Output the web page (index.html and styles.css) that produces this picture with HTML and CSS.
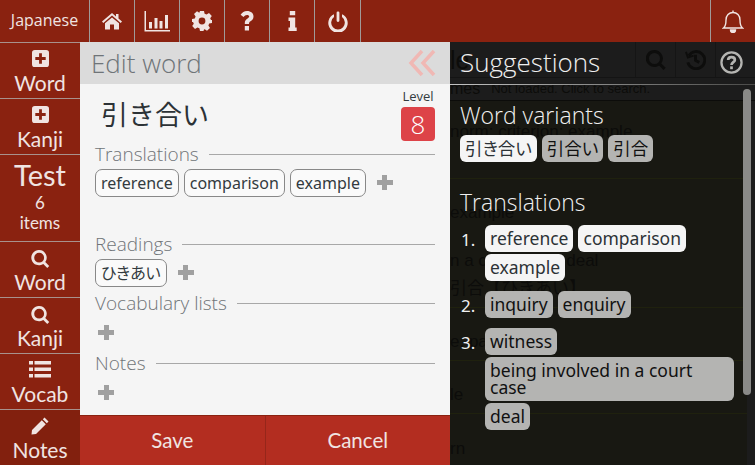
FILE: index.html
```html
<!DOCTYPE html>
<html lang="en">
<head>
    <meta charset="UTF-8">
    <title>Edit word</title>
    <link rel="stylesheet" href="styles.css">
</head>
<body>
    <!-- Top bar -->
    <header class="topbar">
        <div class="lang">Japanese</div>
        <div class="top-btn">
            <svg class="ico" width="22" height="18" viewBox="0 0 22 18"><path d="M11 1 L1 9.6 L2.3 11 L11 3.6 L19.7 11 L21 9.6 L17.5 6.6 V2 H15 V4.5 Z"/><path d="M4 11.3 L11 5.4 L18 11.3 V17.5 H13 V12.5 H9 V17.5 H4 Z"/></svg>
        </div>
        <div class="top-btn">
            <svg class="ico" width="27" height="21" viewBox="0 0 27 21"><path d="M1 0 H2 V19 H26 V20.5 H0.5 V0 Z"/><path d="M5 11 H8 V17.5 H5 Z M10.500 7 H13.500 V17.500 H10.500 Z M15.500 10 H18.500 V17.500 H15.500 Z M21 4 H24 V17.500 H21 Z"/></svg>
        </div>
        <div class="top-btn">
            <svg class="ico" width="20" height="20" viewBox="0 0 20 20"><path fill-rule="evenodd" d="M8 0 H12 L12.600 2.800 L14.600 3.600 L17 2 L19.800 5 L18.200 7.300 L19 9 L20 9 V12 L17.200 12.600 L16.400 14.600 L18 17 L15 19.800 L12.700 18.200 L12 18.500 L11.500 20 H8 L7.400 17.200 L5.400 16.400 L3 18 L0.200 15 L1.800 12.700 L1 11 L0 11 V8 L2.800 7.400 L3.600 5.400 L2 3 L5 0.200 L7.300 1.800 Z M10 6.600 A3.400 3.400 0 1 0 10 13.400 A3.400 3.400 0 1 0 10 6.600 Z"/></svg>
        </div>
        <div class="top-btn">
            <svg class="ico" width="14" height="20" viewBox="0 0 14 20"><path d="M7 0 C11 0 13.500 2.300 13.500 5.500 C13.500 8 12 9.200 10.500 10.200 C9.300 11 9 11.500 9 13 H4.800 V12 C4.800 9.800 5.800 8.700 7.300 7.700 C8.500 6.900 9.200 6.500 9.200 5.600 C9.200 4.600 8.300 4 7 4 C5.600 4 4.500 4.800 3.500 6 L0.600 3.800 C2.200 1.300 4.200 0 7 0 Z M4.800 15 H9 V19.500 H4.800 Z"/></svg>
        </div>
        <div class="top-btn">
            <svg class="ico" width="9" height="20" viewBox="0 0 9 20"><path d="M1.800 0 H7.200 V4.200 H1.800 Z M0.500 6.500 H7.200 V16.500 H8.700 V20 H0.500 V16.500 H2 V10 H0.500 Z"/></svg>
        </div>
        <div class="top-btn last">
            <svg class="ico" width="20" height="21" viewBox="0 0 20 21"><path d="M10 0.500 A1.300 1.300 0 0 1 11.400 1.800 V9.500 A1.400 1.400 0 0 1 8.600 9.500 V1.800 A1.300 1.300 0 0 1 10 0.500 Z"/><path d="M6 3.200 V6.100 A6.800 6.800 0 1 0 14 6.100 V3.200 A9.700 9.700 0 1 1 6 3.200 Z"/></svg>
        </div>
        <div class="top-fill"></div>
        <div class="bell-btn">
            <svg width="22" height="23" viewBox="0 0 22 23" fill="none" stroke="#f0e4e2" stroke-width="1.400"><path d="M1.500 18 C4 16 4 13 4 10 C4 5.500 7 2.500 11 2.500 C15 2.500 18 5.500 18 10 C18 13 18 16 20.500 18 Z"/><path d="M11 0.500 V2.500"/><path d="M8.500 20 A2.500 2.500 0 0 0 13.500 20 Z" fill="#f0e4e2"/></svg>
        </div>
    </header>

    <div class="main">
        <!-- Side menu -->
        <nav class="sidebar">
            <div class="side-btn">
                <div class="side-ico"><svg class="ico" width="17" height="17" viewBox="0 0 18 18"><path fill-rule="evenodd" d="M3 0 H15 A3 3 0 0 1 18 3 V15 A3 3 0 0 1 15 18 H3 A3 3 0 0 1 0 15 V3 A3 3 0 0 1 3 0 Z M7.500 3.500 V7.500 H3.500 V10.500 H7.500 V14.500 H10.500 V10.500 H14.500 V7.500 H10.500 V3.500 Z"/></svg></div>
                <span>Word</span>
            </div>
            <div class="side-btn">
                <div class="side-ico"><svg class="ico" width="17" height="17" viewBox="0 0 18 18"><path fill-rule="evenodd" d="M3 0 H15 A3 3 0 0 1 18 3 V15 A3 3 0 0 1 15 18 H3 A3 3 0 0 1 0 15 V3 A3 3 0 0 1 3 0 Z M7.500 3.500 V7.500 H3.500 V10.500 H7.500 V14.500 H10.500 V10.500 H14.500 V7.500 H10.500 V3.500 Z"/></svg></div>
                <span>Kanji</span>
            </div>
            <div class="side-btn test">
                <span class="test-title">Test</span>
                <span class="test-sub">6</span>
                <span class="test-sub">items</span>
            </div>
            <div class="side-btn">
                <div class="side-ico low"><svg class="ico" width="19" height="18" viewBox="0 0 20 20"><path fill-rule="evenodd" d="M8.500 0 A8.500 8.500 0 0 1 15.300 13.400 L19.700 17.800 L17.500 20 L13.100 15.500 A8.500 8.500 0 1 1 8.500 0 Z M8.500 3 A5.500 5.500 0 1 0 8.500 14 A5.500 5.500 0 1 0 8.500 3 Z"/></svg></div>
                <span>Word</span>
            </div>
            <div class="side-btn">
                <div class="side-ico low"><svg class="ico" width="19" height="18" viewBox="0 0 20 20"><path fill-rule="evenodd" d="M8.500 0 A8.500 8.500 0 0 1 15.300 13.400 L19.700 17.800 L17.500 20 L13.100 15.500 A8.500 8.500 0 1 1 8.500 0 Z M8.500 3 A5.500 5.500 0 1 0 8.500 14 A5.500 5.500 0 1 0 8.500 3 Z"/></svg></div>
                <span>Kanji</span>
            </div>
            <div class="side-btn">
                <div class="side-ico"><svg class="ico" width="22" height="17" viewBox="0 0 22 17"><path d="M0 0 H4 V3.500 H0 Z M5.500 0 H22 V3.500 H5.500 Z M0 6.500 H4 V10 H0 Z M5.500 6.500 H22 V10 H5.500 Z M0 13 H4 V16.500 H0 Z M5.500 13 H22 V16.500 H5.500 Z"/></svg></div>
                <span>Vocab</span>
            </div>
            <div class="side-btn active">
                <div class="side-ico"><svg class="ico" width="18" height="18" viewBox="0 0 18 18"><path d="M13.500 0.500 L17.500 4.500 L15.800 6.200 L11.800 2.200 Z M10.800 3.200 L14.800 7.200 L5 17 L0.500 17.500 L1 13 Z"/></svg></div>
                <span>Notes</span>
            </div>
        </nav>

        <!-- Page underneath, dimmed by the suggestions panel -->
        <div class="backdrop">
            <div class="back-head">
                <span class="back-title">le</span>
                <div class="back-tool">
                    <svg width="20" height="20" viewBox="0 0 20 20" fill="#0d0d0c"><path fill-rule="evenodd" d="M8.500 0 A8.500 8.500 0 0 1 15.300 13.400 L19.700 17.800 L17.500 20 L13.100 15.500 A8.500 8.500 0 1 1 8.500 0 Z M8.500 3 A5.500 5.500 0 1 0 8.500 14 A5.500 5.500 0 1 0 8.500 3 Z"/></svg>
                </div>
                <div class="back-tool">
                    <svg width="21" height="21" viewBox="0 0 22 22" fill="none" stroke="#0d0d0c" stroke-width="3"><path d="M4 7 A9 9 0 1 1 3 14"/><path d="M11 6 V12 L15 14"/><path d="M1 3 L3 9 L9 7" stroke-width="2"/></svg>
                </div>
                <div class="back-tool"></div>
            </div>
            <div class="back-row names"><span>mes</span><span>Not loaded. Click to search.</span></div>
            <div class="back-row meaning">norm; criterion; example</div>
            <div class="back-row entry">
                <div>example</div>
                <div class="entry-deal">n a court case; deal</div>
                <div class="entry-kana">引合【ひきあい】</div>
            </div>
            <div class="back-row short">e; pattern</div>
            <div class="back-row short">le</div>
            <div class="back-row end">rn</div>
        </div>

        <!-- Edit word dialog -->
        <section class="dialog">
            <div class="dialog-head">
                <h1>Edit word</h1>
                <svg class="collapse" width="28" height="28" viewBox="0 0 28 28" fill="none" stroke="#f0b8b4" stroke-width="3.500"><path d="M14 2 L3 14 L14 26"/><path d="M26 2 L15 14 L26 26"/></svg>
            </div>
            <div class="dialog-body">
                <div class="word-row">
                    <div class="word">引き合い</div>
                    <div class="level">
                        <span class="level-label">Level</span>
                        <span class="level-num">8</span>
                    </div>
                </div>
                <div class="section-head"><span>Translations</span><i></i></div>
                <div class="tags tall">
                    <span class="tag">reference</span>
                    <span class="tag">comparison</span>
                    <span class="tag">example</span>
                    <span class="plus"></span>
                </div>
                <div class="section-head"><span>Readings</span><i></i></div>
                <div class="tags">
                    <span class="tag">ひきあい</span>
                    <span class="plus"></span>
                </div>
                <div class="section-head"><span>Vocabulary lists</span><i></i></div>
                <div class="tags only-plus"><span class="plus"></span></div>
                <div class="section-head"><span>Notes</span><i></i></div>
                <div class="tags only-plus"><span class="plus"></span></div>
            </div>
            <div class="dialog-foot">
                <button>Save</button>
                <button>Cancel</button>
            </div>
        </section>

        <!-- Suggestions panel -->
        <aside class="suggest">
            <div class="suggest-head">Suggestions
                <svg class="help" width="23" height="23" viewBox="0 0 24 24" fill="none" stroke="#b5b5b2" stroke-width="2.400"><circle cx="12" cy="12" r="10.500"/><path d="M8.500 9.500 C8.500 7.500 10 6.300 12 6.300 C14 6.300 15.500 7.500 15.500 9.300 C15.500 11.500 12 11.700 12 14.500" stroke-width="2.800"/><path d="M12 16 V19" stroke-width="2.800"/></svg>
            </div>
            <div class="suggest-scroll">
                <h2>Word variants</h2>
                <div class="chips">
                    <span class="chip on">引き合い</span>
                    <span class="chip">引合い</span>
                    <span class="chip">引合</span>
                </div>
                <h2 class="second">Translations</h2>
                <ol class="meanings">
                    <li>
                        <span class="chip on">reference</span>
                        <span class="chip on">comparison</span>
                        <span class="chip on">example</span>
                    </li>
                    <li>
                        <span class="chip">inquiry</span>
                        <span class="chip">enquiry</span>
                    </li>
                    <li>
                        <span class="chip">witness</span>
                        <span class="chip">being involved in a court case</span>
                        <span class="chip">deal</span>
                    </li>
                </ol>
            </div>
            <div class="scrollbar"></div>
        </aside>
    </div>
</body>
</html>
```

FILE: styles.css
```css
/* General */
html, body {
    margin: 0;
    height: 100%;
}

body {
    width: 755px;
    height: 465px;
    overflow: hidden;
    display: flex;
    flex-direction: column;
    font-family: "Noto Sans", "Noto Sans CJK JP", sans-serif;
    font-feature-settings: "palt";
    background-color: #1c1c1c;
}

.ico {
    fill: #f0e4e2;
    display: block;
}

/* Top bar */
.topbar {
    display: flex;
    height: 42px;
    flex: none;
    background-color: #8a2210;
}

.lang {
    width: 89px;
    border-right: 1px solid #a09a98;
    color: #f0e4e2;
    font-family: "Open Sans", sans-serif;
    font-size: 16px;
    line-height: 41px;
    text-align: center;
}

.top-btn {
    width: 44px;
    border-right: 1px solid #a09a98;
    display: flex;
    align-items: center;
    justify-content: center;
}

.top-btn.last {
    width: 45px;
}

.top-fill {
    flex: 1;
}

.bell-btn {
    width: 44px;
    border-left: 1px solid #a09a98;
    display: flex;
    align-items: center;
    justify-content: center;
}

/* Layout */
.main {
    flex: 1;
    display: flex;
    position: relative;
    min-height: 0;
}

/* Side menu */
.sidebar {
    width: 80px;
    flex: none;
    background-color: #8a2210;
    border-top: 1px solid #a8918c;
    box-sizing: border-box;
    display: flex;
    flex-direction: column;
    color: #f0e4e2;
    font-family: "Lato", sans-serif;
}

.side-btn {
    display: flex;
    flex-direction: column;
    align-items: center;
    height: 56px;
    flex: none;
    border-bottom: 1px solid #a8918c;
    box-sizing: border-box;
    padding-top: 7px;
    font-size: 21px;
    line-height: 24px;
}

.side-ico {
    height: 21px;
}

.side-ico.low {
    padding-top: 1px;
    height: 20px;
}

.side-btn.test {
    height: 87px;
    padding-top: 5px;
}

.side-btn.active {
    flex: 1;
    background-color: #82200e;
    border-bottom: none;
}

.test-title {
    font-size: 29px;
    line-height: 30px;
    margin-bottom: 3px;
}

.test-sub {
    font-size: 17px;
    line-height: 20px;
}

/* Dimmed page */
.backdrop {
    flex: 1;
    padding-left: 370px;
    color: #0c0c0a;
    font-family: "Liberation Sans", "Noto Sans CJK JP", sans-serif;
    font-feature-settings: normal;
    font-size: 17px;
    line-height: 20px;
    overflow: hidden;
}

.back-head {
    height: 35px;
    display: flex;
    align-items: center;
    justify-content: flex-end;
    border-bottom: 1px solid #141414;
}

.back-title {
    margin-right: auto;
    font-size: 25px;
}

.back-tool {
    width: 40px;
    height: 35px;
    border-left: 1px solid #151515;
    box-sizing: border-box;
    display: flex;
    align-items: center;
    justify-content: center;
}

.back-row {
    margin-right: 8px;
    border-bottom: 1px solid #1f210e;
    box-sizing: border-box;
    background-color: #181812;
}

.names {
    height: 23px;
    display: flex;
    gap: 11px;
    font-size: 13px;
    line-height: 22px;
    margin-right: 0;
    border-bottom-color: #0c0c0a;
    background-color: #1c1c1c;
}

.names span:first-child {
    font-size: 16px;
}

.meaning {
    height: 78px;
    padding-top: 21px;
}

.entry {
    height: 129px;
    padding-top: 24px;
}

.entry-deal {
    margin-top: 28px;
}

.entry-kana {
    margin-top: 8px;
}

.short {
    height: 53px;
    padding-top: 24px;
}

.end {
    height: 60px;
    padding-top: 25px;
    border-bottom: none;
}

/* Dialog */
.dialog {
    position: absolute;
    left: 80px;
    top: 0;
    bottom: 0;
    width: 370px;
    display: flex;
    flex-direction: column;
    background-color: #f5f5f5;
}

.dialog-head {
    height: 42px;
    flex: none;
    background-color: #dbdbdb;
    display: flex;
    align-items: center;
    justify-content: space-between;
    padding: 0 14px 0 11px;
}

.dialog-head h1 {
    margin: 0;
    font-family: "Open Sans", sans-serif;
    font-weight: 300;
    font-size: 26px;
    color: #6f7478;
}

.dialog-body {
    flex: 1;
    padding: 0 15px;
    min-height: 0;
}

.word-row {
    display: flex;
    justify-content: space-between;
    height: 58px;
}

.word {
    font-family: "Noto Sans CJK JP", sans-serif;
    font-feature-settings: normal;
    font-size: 27px;
    line-height: 40px;
    color: #2c3236;
    padding: 10px 0 0 6px;
}

.level {
    display: flex;
    flex-direction: column;
    align-items: center;
    padding-top: 4px;
    gap: 3px;
}

.level-label {
    font-family: "Open Sans", sans-serif;
    font-size: 13px;
    line-height: 16px;
    color: #333b40;
}

.level-num {
    width: 34px;
    height: 34px;
    border-radius: 4px;
    background-color: #dd4348;
    color: #fff;
    font-family: "Open Sans", sans-serif;
    font-weight: 300;
    font-size: 26px;
    line-height: 34px;
    text-align: center;
}

.section-head {
    display: flex;
    align-items: center;
    gap: 10px;
    height: 24px;
    font-family: "Open Sans", sans-serif;
    font-weight: 300;
    font-size: 19px;
    color: #707478;
}

.section-head i {
    flex: 1;
    height: 1px;
    background-color: #a8a8a8;
}

.tags {
    display: flex;
    align-items: flex-start;
    gap: 5px;
    height: 32px;
    padding-top: 3px;
}

.tags.tall {
    height: 63px;
}

.tags.only-plus {
    height: 35px;
    padding: 0 0 1px;
    align-items: center;
}

.tag {
    border: 1px solid #888;
    border-radius: 7px;
    background-color: #fafafa;
    color: #333b40;
    font-size: 16px;
    line-height: 26px;
    padding: 0 5px;
}

.plus {
    width: 16px;
    height: 15px;
    margin: 6px 0 0 6px;
    background:
        linear-gradient(#a0a0a0, #a0a0a0) center / 16px 5px no-repeat,
        linear-gradient(#a0a0a0, #a0a0a0) center / 5px 15px no-repeat;
}

.only-plus .plus {
    margin: 0 0 0 3px;
}

.dialog-foot {
    height: 50px;
    flex: none;
    display: flex;
    background-color: #b32d20;
    border-top: 1px solid #8a2210;
    box-sizing: border-box;
}

.dialog-foot button {
    flex: 1;
    border: none;
    background: none;
    color: #f0e4e2;
    font-family: "Lato", sans-serif;
    font-size: 20.5px;
    padding: 0 0 2px;
}

.dialog-foot button + button {
    border-left: 1px solid #96261a;
}

/* Suggestions */
.suggest {
    position: absolute;
    left: 450px;
    right: 0;
    top: 0;
    bottom: 0;
    color: #f0f0f0;
}

.suggest-head {
    height: 42px;
    border-bottom: 1px solid #8a8a88;
    border-image: linear-gradient(90deg, #c4c4c4, #4a4a48) 1;
    padding-left: 10px;
    font-family: "Open Sans", sans-serif;
    font-weight: 300;
    font-size: 26px;
    line-height: 40px;
    position: relative;
}

.help {
    position: absolute;
    right: 12px;
    top: 9px;
}

.suggest-scroll {
    padding: 15px 21px 0 10px;
}

.suggest-scroll h2 {
    margin: 0 0 5px;
    font-family: "Open Sans", sans-serif;
    font-weight: 300;
    font-size: 23px;
    line-height: 30px;
}

.suggest-scroll h2.second {
    margin: 25px 0 8px;
}

.chips {
    display: flex;
    gap: 5px;
}

.chip {
    background-color: #b4b4b2;
    color: #111;
    border-radius: 6px;
    font-size: 17.5px;
    line-height: 17px;
    padding: 5px;
    display: inline-block;
}

.chip.on {
    background-color: #f5f5f5;
    color: #2c3236;
}

.meanings {
    margin: 0;
    padding: 0;
    list-style: none;
    counter-reset: m;
}

.meanings li {
    counter-increment: m;
    display: flex;
    flex-wrap: wrap;
    gap: 2px 5px;
    padding-left: 25px;
    position: relative;
    margin-bottom: 10px;
}

.meanings li::before {
    content: counter(m) ".";
    position: absolute;
    left: 1px;
    top: 3px;
    font-size: 17px;
}

.scrollbar {
    position: absolute;
    right: 4px;
    top: 47px;
    width: 8px;
    height: 306px;
    border-radius: 4px;
    background-color: #8a8a88;
}
```
